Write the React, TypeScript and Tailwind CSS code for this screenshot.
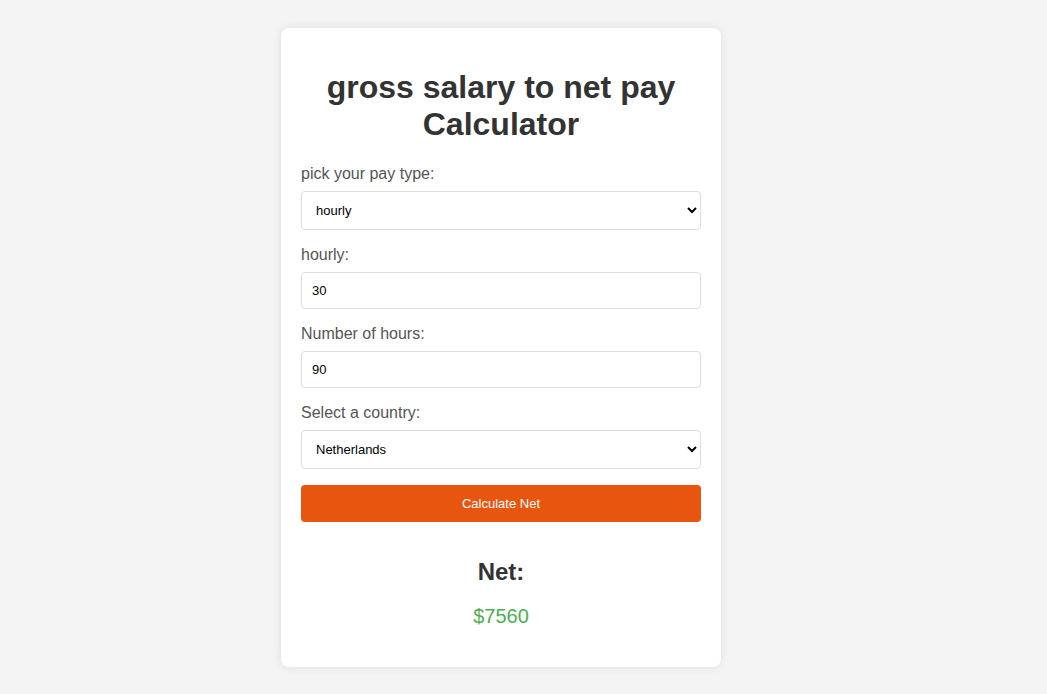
import React from "react";

export default function App() {
  const font = { fontFamily: '"Liberation Sans", Arial, sans-serif' };
  return (
    <div className="min-h-[694px] w-full bg-[#f4f4f4] pt-[28px] pb-[27px]" style={font}>
      <div className="ml-[281px] w-[440px] rounded-[8px] bg-white p-[20px] shadow-[0_0_10px_rgba(0,0,0,0.1)]">
        <h1 className="mt-[21px] mb-[22px] text-center text-[32px] font-bold leading-[37px] text-[#333]">
          gross salary to net pay Calculator
        </h1>
        <label className="mb-[8px] block text-[16px] leading-[18px] text-[#555]">pick your pay type:</label>
        <select
          defaultValue="hourly"
          className="mb-[16px] block h-[39px] w-full rounded-[4px] border border-[#ddd] bg-white px-[10px] text-[13px] text-black"
          style={font}
        >
          <option value="hourly">hourly</option>
          <option value="monthly">monthly</option>
          <option value="yearly">yearly</option>
        </select>
        <label className="mb-[8px] block text-[16px] leading-[18px] text-[#555]">hourly:</label>
        <input
          defaultValue="30"
          className="mb-[16px] block h-[37px] w-full rounded-[4px] border border-[#ddd] px-[10px] text-[13px] text-black outline-none"
          style={font}
        />
        <label className="mb-[8px] block text-[16px] leading-[18px] text-[#555]">Number of hours:</label>
        <input
          defaultValue="90"
          className="mb-[16px] block h-[37px] w-full rounded-[4px] border border-[#ddd] px-[10px] text-[13px] text-black outline-none"
          style={font}
        />
        <label className="mb-[8px] block text-[16px] leading-[18px] text-[#555]">Select a country:</label>
        <select
          defaultValue="nl"
          className="mb-[16px] block h-[39px] w-full rounded-[4px] border border-[#ddd] bg-white px-[10px] text-[13px] text-black"
          style={font}
        >
          <option value="nl">Netherlands</option>
          <option value="de">Germany</option>
        </select>
        <button
          className="block h-[37px] w-full rounded-[4px] bg-[#e8550f] text-[13px] font-normal text-white"
          style={font}
        >
          Calculate Net
        </button>
        <div className="mt-[36px] text-center">
          <h2 className="text-[24px] font-bold leading-[28px] text-[#333]">Net:</h2>
          <p className="mt-[19px] mb-[19px] text-[20px] leading-[23px] text-[#4caf50]">$7560</p>
        </div>
      </div>
    </div>
  );
}
